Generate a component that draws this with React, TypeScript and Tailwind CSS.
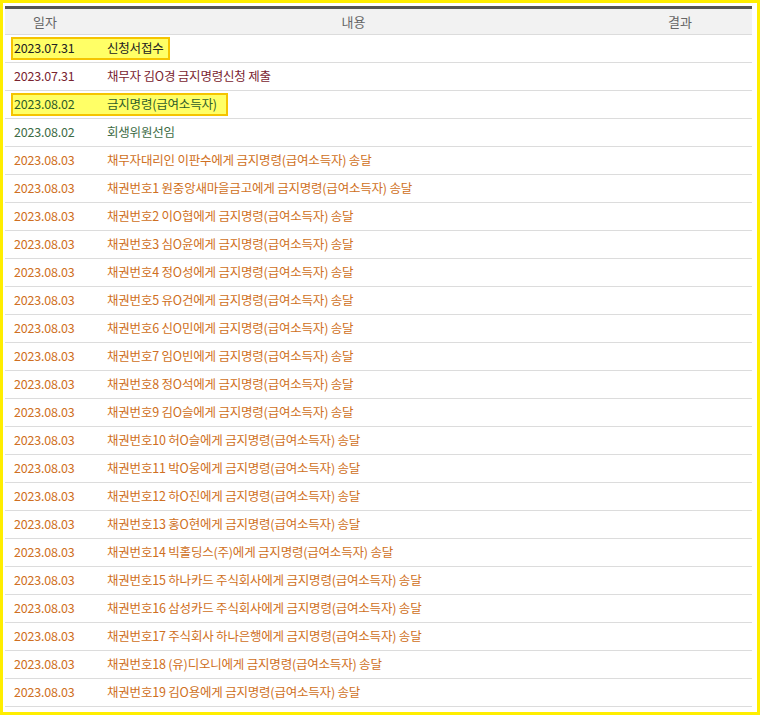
const rows: [string, string, string, boolean?, number?][] = [
  ["2023.07.31", "신청서접수", "#222", true, 159],
  ["2023.07.31", "채무자 김O경 금지명령신청 제출", "#7a2430"],
  ["2023.08.02", "금지명령(급여소득자)", "#2f5d2a", true, 217],
  ["2023.08.02", "회생위원선임", "#3d6b45"],
  ["2023.08.03", "채무자대리인 이판수에게 금지명령(급여소득자) 송달", "#cf6f22"],
  ["2023.08.03", "채권번호1 원중앙새마을금고에게 금지명령(급여소득자) 송달", "#cf6f22"],
  ["2023.08.03", "채권번호2 이O협에게 금지명령(급여소득자) 송달", "#cf6f22"],
  ["2023.08.03", "채권번호3 심O윤에게 금지명령(급여소득자) 송달", "#cf6f22"],
  ["2023.08.03", "채권번호4 정O성에게 금지명령(급여소득자) 송달", "#cf6f22"],
  ["2023.08.03", "채권번호5 유O건에게 금지명령(급여소득자) 송달", "#cf6f22"],
  ["2023.08.03", "채권번호6 신O민에게 금지명령(급여소득자) 송달", "#cf6f22"],
  ["2023.08.03", "채권번호7 임O빈에게 금지명령(급여소득자) 송달", "#cf6f22"],
  ["2023.08.03", "채권번호8 정O석에게 금지명령(급여소득자) 송달", "#cf6f22"],
  ["2023.08.03", "채권번호9 김O슬에게 금지명령(급여소득자) 송달", "#cf6f22"],
  ["2023.08.03", "채권번호10 허O슬에게 금지명령(급여소득자) 송달", "#cf6f22"],
  ["2023.08.03", "채권번호11 박O웅에게 금지명령(급여소득자) 송달", "#cf6f22"],
  ["2023.08.03", "채권번호12 하O진에게 금지명령(급여소득자) 송달", "#cf6f22"],
  ["2023.08.03", "채권번호13 홍O현에게 금지명령(급여소득자) 송달", "#cf6f22"],
  ["2023.08.03", "채권번호14 빅홀딩스(주)에게 금지명령(급여소득자) 송달", "#cf6f22"],
  ["2023.08.03", "채권번호15 하나카드 주식회사에게 금지명령(급여소득자) 송달", "#cf6f22"],
  ["2023.08.03", "채권번호16 삼성카드 주식회사에게 금지명령(급여소득자) 송달", "#cf6f22"],
  ["2023.08.03", "채권번호17 주식회사 하나은행에게 금지명령(급여소득자) 송달", "#cf6f22"],
  ["2023.08.03", "채권번호18 (유)디오니에게 금지명령(급여소득자) 송달", "#cf6f22"],
  ["2023.08.03", "채권번호19 김O용에게 금지명령(급여소득자) 송달", "#cf6f22"],
];

export default function App() {
  return (
    <div
      className="w-[760px] h-[715px] border-[3px] border-[#ffee00] bg-white pl-[2px] pt-[3px] overflow-hidden"
      style={{ fontFamily: '"Malgun Gothic", "Noto Sans CJK KR", sans-serif' }}
    >
      <div className="w-[747px]">
        <div className="h-[29px] border-t-[3px] border-[#555] border-b border-b-[#dcdcdc] bg-[#f2f2f2] flex items-center text-[13px] text-[#666]">
          <div className="w-[80px] text-center">일자</div>
          <div className="flex-1 text-center pl-[20px]">내용</div>
          <div className="w-[150px] text-center pl-[6px]">결과</div>
        </div>
        {rows.map(([d, t, c, hl, w], i) => (
          <div key={i} className="h-[28px] border-b border-[#dcdcdc] flex items-center text-[12.5px] pl-[6px] tracking-[-0.2px]" style={{ color: c }}>
            {hl ? (
              <div className="h-[23px] flex items-center bg-[#ffff66] border-2 border-[#f5c400] pl-[1px]" style={{ width: w }}>
                <span className="w-[93px]">{d}</span>
                <span>{t}</span>
              </div>
            ) : (
              <div className="flex items-center pl-[3px]">
                <span className="w-[93px]">{d}</span>
                <span>{t}</span>
              </div>
            )}
          </div>
        ))}
      </div>
    </div>
  );
}
